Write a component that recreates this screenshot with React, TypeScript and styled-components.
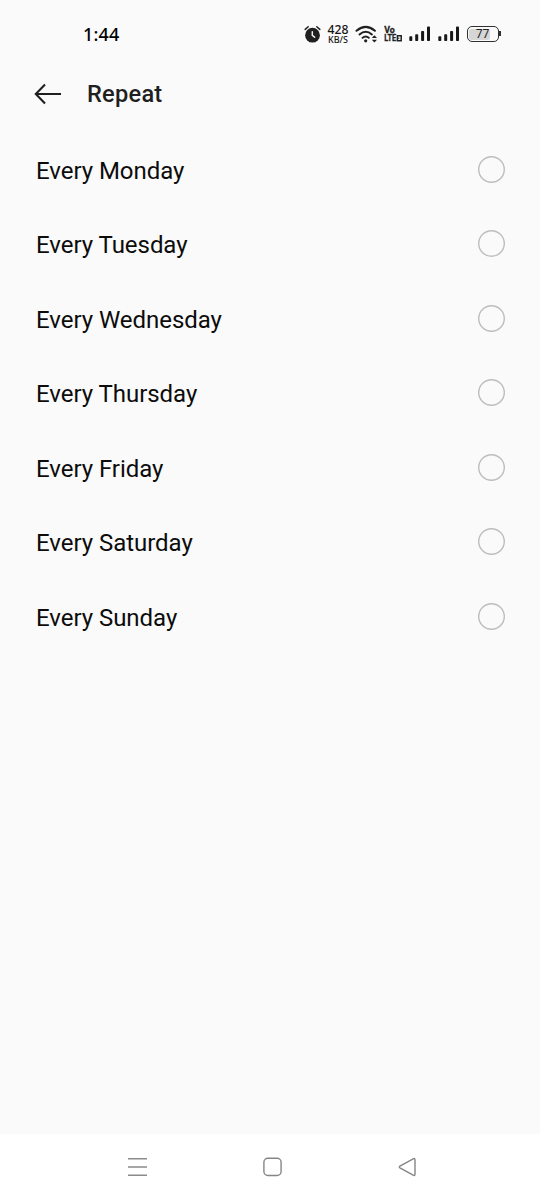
import React from "react";
import styled, { createGlobalStyle } from "styled-components";

const GlobalStyle = createGlobalStyle`
  * { box-sizing: border-box; }
  body { margin: 0; background: #fafafa; font-family: Roboto, sans-serif; color: #0c0c0c; }
`;

const Screen = styled.div`
  display: flex;
  flex-direction: column;
  width: 540px;
  height: 1200px;
  background: #fafafa;
`;

const StatusBar = styled.header`
  display: flex;
  justify-content: space-between;
  align-items: center;
  height: 68px;
  padding: 0 41.5px 0 83px;
`;

const Clock = styled.time`
  font: 500 18px/22px "Noto Sans", sans-serif;
  letter-spacing: 0.2px;
  color: #000;
`;

const StatusIcons = styled.div`
  display: flex;
  align-items: center;
  height: 24px;
`;

const Glyph = styled.svg<{ $gap?: number }>`
  display: block;
  flex: none;
  margin-left: ${(p) => p.$gap ?? 0}px;
`;

const Speed = styled.div`
  display: flex;
  flex-direction: column;
  align-items: center;
  width: 23px;
  margin-left: 5.5px;
  font-family: "Noto Sans", sans-serif;
  font-weight: 500;
  color: #151515;
`;

const SpeedValue = styled.span`
  font-size: 12.2px;
  line-height: 11px;
`;

const SpeedUnit = styled.span`
  font-size: 9px;
  line-height: 9px;
`;

const Battery = styled.div`
  position: relative;
  display: flex;
  width: 32px;
  height: 16px;
  margin-left: 7px;
  padding: 1.5px;
  border: 1.5px solid #303030;
  border-radius: 5px;

  &::after {
    content: "";
    position: absolute;
    right: -3px;
    top: 4px;
    width: 2px;
    height: 5px;
    background: #303030;
  }
`;

const BatteryLevel = styled.div`
  width: 21px;
  border-radius: 2px;
  background: #d6d6d6;
`;

const BatteryText = styled.span`
  position: absolute;
  inset: 0;
  text-align: center;
  font: 400 12px/14px "Noto Sans", sans-serif;
  color: #222;
`;

const TitleBar = styled.div`
  display: flex;
  align-items: center;
  height: 50px;
  padding-left: 34px;
`;

const Title = styled.h1`
  margin: 0 0 0 25px;
  padding-top: 2px;
  font-size: 23.6px;
  font-weight: 500;
  line-height: 30px;
  letter-spacing: 0.25px;
  color: #1f1f1f;
`;

const DayList = styled.ul`
  flex: 1;
  margin: 0;
  padding: 14px 35px 0 36px;
  list-style: none;
`;

const DayRow = styled.li`
  display: flex;
  justify-content: space-between;
  align-items: center;
  height: 74.5px;
`;

const DayLabel = styled.span`
  font-size: 24px;
  line-height: 28px;
  letter-spacing: -0.04px;
  padding-top: 2.6px;
`;

const NavBar = styled.nav`
  display: flex;
  align-items: center;
  height: 66px;
  padding-left: 128px;
  background: #fff;
`;

const days = ["Monday", "Tuesday", "Wednesday", "Thursday", "Friday", "Saturday", "Sunday"];

const AlarmIcon = () => (
  <Glyph width="17" height="20" viewBox="0 0 17 20">
    <circle cx="8.5" cy="11.2" r="7.4" fill="#202020" />
    <path d="M1.2 5.4L4.2 2.8M15.8 5.4L12.8 2.8" stroke="#202020" strokeWidth="1.5" strokeLinecap="round" />
    <path d="M8.3 7.8V11.4L10.6 13.2" fill="none" stroke="#eee" strokeWidth="1.5" strokeLinecap="round" />
  </Glyph>
);

const WifiIcon = () => (
  <Glyph $gap={5} width="24" height="20" viewBox="0 0 24 20">
    <g fill="none" stroke="#202020" strokeWidth="2" strokeLinecap="round">
      <path d="M1.5 6.8Q10.7 -1 19.9 6.8" />
      <path d="M4.5 10.4Q10.7 5 16.9 10.4" />
      <path d="M7.6 13.8Q10.7 11.2 13.8 13.8" />
    </g>
    <circle cx="10.7" cy="16.8" r="1.6" fill="#202020" />
    <path d="M16.8 14L19.4 11.2L22 14ZM16.8 15.8L19.4 18.6L22 15.8Z" fill="#202020" />
  </Glyph>
);

const VolteIcon = () => (
  <Glyph $gap={5.5} width="19" height="18" viewBox="0 0 19 18">
    <g fill="#222" stroke="#222" strokeWidth="0.3" fontFamily="Roboto, sans-serif" fontWeight="700">
      <text x="0.3" y="8.2" fontSize="8.8" textLength="10.5" lengthAdjust="spacingAndGlyphs">Vo</text>
      <text x="0.3" y="16.4" fontSize="9" textLength="11.8" lengthAdjust="spacingAndGlyphs">LTE</text>
    </g>
    <path d="M13.4 10.7H17.2V15.7H13.4Z" fill="none" stroke="#222" strokeWidth="1.5" />
    <path d="M13.4 13.2H15.4" stroke="#222" strokeWidth="1" />
  </Glyph>
);

const SignalIcon = ({ gap }: { gap: number }) => (
  <Glyph $gap={gap} width="22" height="16" viewBox="0 0 22 16">
    <g fill="#181818">
      <rect x="0.3" y="10.2" width="3" height="4.8" rx="0.8" />
      <rect x="6.2" y="8.2" width="3" height="6.8" rx="0.8" />
      <rect x="12.1" y="4.9" width="3" height="10.1" rx="0.8" />
      <rect x="18" y="0.4" width="3" height="14.6" rx="0.8" />
    </g>
  </Glyph>
);

const Radio = () => (
  <Glyph width="27" height="27" viewBox="0 0 27 27">
    <circle cx="13.5" cy="13.5" r="12.8" fill="none" stroke="#bdbdbd" strokeWidth="1.4" />
  </Glyph>
);

export default function App() {
  return (
    <>
      <GlobalStyle />
      <Screen>
        <StatusBar>
          <Clock>1:44</Clock>
          <StatusIcons>
            <AlarmIcon />
            <Speed>
              <SpeedValue>428</SpeedValue>
              <SpeedUnit>KB/S</SpeedUnit>
            </Speed>
            <WifiIcon />
            <VolteIcon />
            <SignalIcon gap={6} />
            <SignalIcon gap={6.5} />
            <Battery>
              <BatteryLevel />
              <BatteryText>77</BatteryText>
            </Battery>
          </StatusIcons>
        </StatusBar>
        <TitleBar>
          <Glyph width="28" height="24" viewBox="0 0 28 24">
            <path d="M11 3.5L1.8 13L11 22.5M2 13H27" fill="none" stroke="#1f1f1f" strokeWidth="2.1" />
          </Glyph>
          <Title>Repeat</Title>
        </TitleBar>
        <DayList>
          {days.map((day) => (
            <DayRow key={day}>
              <DayLabel>Every {day}</DayLabel>
              <Radio />
            </DayRow>
          ))}
        </DayList>
        <NavBar>
          <Glyph width="19" height="20" viewBox="0 0 19 20">
            <path d="M0 1.8H19M0 10H19M0 18.2H19" stroke="#8b8b8b" strokeWidth="1.5" />
          </Glyph>
          <Glyph $gap={116} width="19" height="20" viewBox="0 0 19 20">
            <rect x="0.9" y="1.3" width="17.2" height="17.2" rx="4" fill="none" stroke="#858585" strokeWidth="1.4" />
          </Glyph>
          <Glyph $gap={116} width="19" height="20" viewBox="0 0 19 20">
            <path d="M1.9 9.1L15.2 1.8Q17 1 17 3V17Q17 19 15.2 18.2L1.9 10.9Q.7 10 1.9 9.1Z" fill="none" stroke="#858585" strokeWidth="1.4" />
          </Glyph>
        </NavBar>
      </Screen>
    </>
  );
}
